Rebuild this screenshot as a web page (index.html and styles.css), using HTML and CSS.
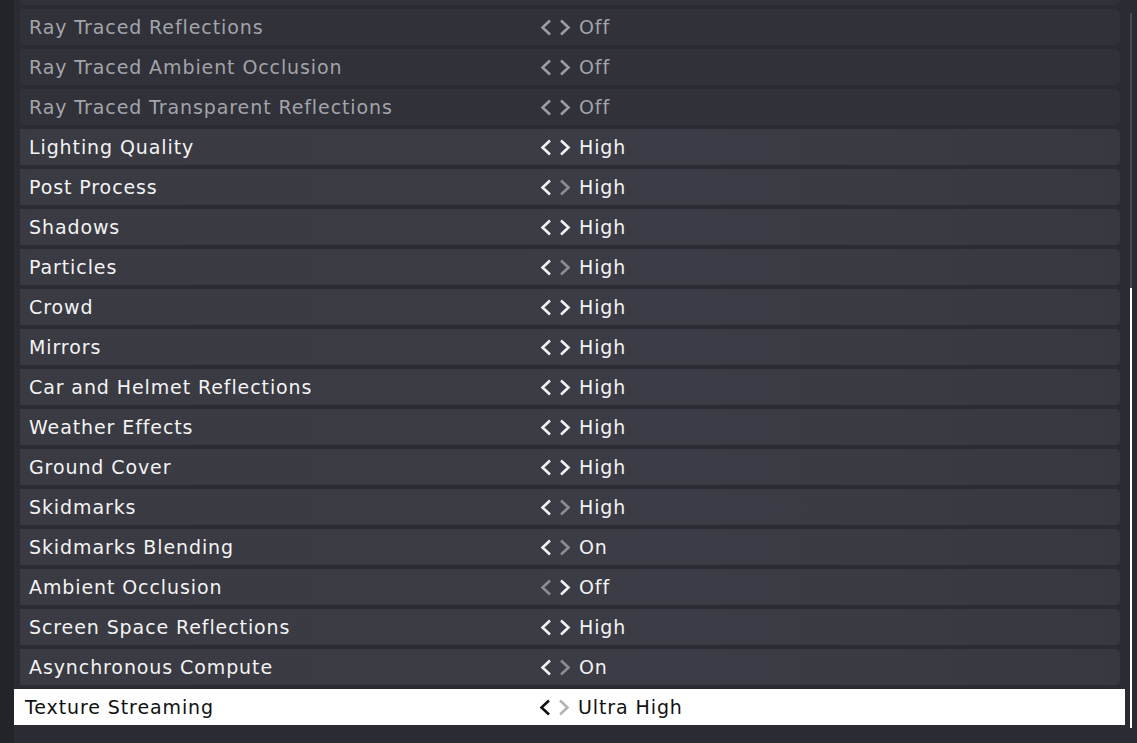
FILE: index.html
```html
<!DOCTYPE html>
<html>
<head>
<meta charset="utf-8">
<link rel="stylesheet" href="styles.css">
</head>
<body>
<div class="screen">
  <div class="edge"></div>
  <div class="panel">
    <div class="list">
      <div class="row disabled"></div>
      <div class="row disabled"><div class="label">Ray Traced Reflections</div><div class="value"><span class="chev"><svg viewBox="0 0 12 17"><polyline points="10,1.5 2.5,8.5 10,15.5"/></svg><svg viewBox="0 0 12 17"><polyline points="2,1.5 9.5,8.5 2,15.5"/></svg></span><span class="val">Off</span></div></div>
      <div class="row disabled"><div class="label">Ray Traced Ambient Occlusion</div><div class="value"><span class="chev"><svg viewBox="0 0 12 17"><polyline points="10,1.5 2.5,8.5 10,15.5"/></svg><svg viewBox="0 0 12 17"><polyline points="2,1.5 9.5,8.5 2,15.5"/></svg></span><span class="val">Off</span></div></div>
      <div class="row disabled"><div class="label">Ray Traced Transparent Reflections</div><div class="value"><span class="chev"><svg viewBox="0 0 12 17"><polyline points="10,1.5 2.5,8.5 10,15.5"/></svg><svg viewBox="0 0 12 17"><polyline points="2,1.5 9.5,8.5 2,15.5"/></svg></span><span class="val">Off</span></div></div>
      <div class="row"><div class="label">Lighting Quality</div><div class="value"><span class="chev"><svg viewBox="0 0 12 17"><polyline points="10,1.5 2.5,8.5 10,15.5"/></svg><svg viewBox="0 0 12 17"><polyline points="2,1.5 9.5,8.5 2,15.5"/></svg></span><span class="val">High</span></div></div>
      <div class="row"><div class="label">Post Process</div><div class="value"><span class="chev"><svg viewBox="0 0 12 17"><polyline points="10,1.5 2.5,8.5 10,15.5"/></svg><svg class="off" viewBox="0 0 12 17"><polyline points="2,1.5 9.5,8.5 2,15.5"/></svg></span><span class="val">High</span></div></div>
      <div class="row"><div class="label">Shadows</div><div class="value"><span class="chev"><svg viewBox="0 0 12 17"><polyline points="10,1.5 2.5,8.5 10,15.5"/></svg><svg viewBox="0 0 12 17"><polyline points="2,1.5 9.5,8.5 2,15.5"/></svg></span><span class="val">High</span></div></div>
      <div class="row"><div class="label">Particles</div><div class="value"><span class="chev"><svg viewBox="0 0 12 17"><polyline points="10,1.5 2.5,8.5 10,15.5"/></svg><svg class="off" viewBox="0 0 12 17"><polyline points="2,1.5 9.5,8.5 2,15.5"/></svg></span><span class="val">High</span></div></div>
      <div class="row"><div class="label">Crowd</div><div class="value"><span class="chev"><svg viewBox="0 0 12 17"><polyline points="10,1.5 2.5,8.5 10,15.5"/></svg><svg viewBox="0 0 12 17"><polyline points="2,1.5 9.5,8.5 2,15.5"/></svg></span><span class="val">High</span></div></div>
      <div class="row"><div class="label">Mirrors</div><div class="value"><span class="chev"><svg viewBox="0 0 12 17"><polyline points="10,1.5 2.5,8.5 10,15.5"/></svg><svg viewBox="0 0 12 17"><polyline points="2,1.5 9.5,8.5 2,15.5"/></svg></span><span class="val">High</span></div></div>
      <div class="row"><div class="label">Car and Helmet Reflections</div><div class="value"><span class="chev"><svg viewBox="0 0 12 17"><polyline points="10,1.5 2.5,8.5 10,15.5"/></svg><svg viewBox="0 0 12 17"><polyline points="2,1.5 9.5,8.5 2,15.5"/></svg></span><span class="val">High</span></div></div>
      <div class="row"><div class="label">Weather Effects</div><div class="value"><span class="chev"><svg viewBox="0 0 12 17"><polyline points="10,1.5 2.5,8.5 10,15.5"/></svg><svg viewBox="0 0 12 17"><polyline points="2,1.5 9.5,8.5 2,15.5"/></svg></span><span class="val">High</span></div></div>
      <div class="row"><div class="label">Ground Cover</div><div class="value"><span class="chev"><svg viewBox="0 0 12 17"><polyline points="10,1.5 2.5,8.5 10,15.5"/></svg><svg viewBox="0 0 12 17"><polyline points="2,1.5 9.5,8.5 2,15.5"/></svg></span><span class="val">High</span></div></div>
      <div class="row"><div class="label">Skidmarks</div><div class="value"><span class="chev"><svg viewBox="0 0 12 17"><polyline points="10,1.5 2.5,8.5 10,15.5"/></svg><svg class="off" viewBox="0 0 12 17"><polyline points="2,1.5 9.5,8.5 2,15.5"/></svg></span><span class="val">High</span></div></div>
      <div class="row"><div class="label">Skidmarks Blending</div><div class="value"><span class="chev"><svg viewBox="0 0 12 17"><polyline points="10,1.5 2.5,8.5 10,15.5"/></svg><svg class="off" viewBox="0 0 12 17"><polyline points="2,1.5 9.5,8.5 2,15.5"/></svg></span><span class="val">On</span></div></div>
      <div class="row"><div class="label">Ambient Occlusion</div><div class="value"><span class="chev"><svg class="off" viewBox="0 0 12 17"><polyline points="10,1.5 2.5,8.5 10,15.5"/></svg><svg viewBox="0 0 12 17"><polyline points="2,1.5 9.5,8.5 2,15.5"/></svg></span><span class="val">Off</span></div></div>
      <div class="row"><div class="label">Screen Space Reflections</div><div class="value"><span class="chev"><svg viewBox="0 0 12 17"><polyline points="10,1.5 2.5,8.5 10,15.5"/></svg><svg viewBox="0 0 12 17"><polyline points="2,1.5 9.5,8.5 2,15.5"/></svg></span><span class="val">High</span></div></div>
      <div class="row"><div class="label">Asynchronous Compute</div><div class="value"><span class="chev"><svg viewBox="0 0 12 17"><polyline points="10,1.5 2.5,8.5 10,15.5"/></svg><svg class="off" viewBox="0 0 12 17"><polyline points="2,1.5 9.5,8.5 2,15.5"/></svg></span><span class="val">On</span></div></div>
      <div class="row selected"><div class="label">Texture Streaming</div><div class="value"><span class="chev"><svg viewBox="0 0 12 17"><polyline points="10,1.5 2.5,8.5 10,15.5"/></svg><svg class="off" viewBox="0 0 12 17"><polyline points="2,1.5 9.5,8.5 2,15.5"/></svg></span><span class="val">Ultra High</span></div></div>
    </div>
    <div class="scrollbar"><div class="thumb"></div></div>
  </div>
</div>
</body>
</html>
```

FILE: styles.css
```css
html, body {
  margin: 0;
  padding: 0;
  background: #2a2b33;
  overflow: hidden;
}
.screen {
  display: flex;
  width: 1137px;
  height: 743px;
  overflow: hidden;
  font-family: "DejaVu Sans", "Liberation Sans", sans-serif;
  font-size: 19px;
  letter-spacing: 0.9px;
}
.edge {
  width: 14px;
  flex: none;
  background: #232429;
}
.panel {
  flex: 1;
  display: flex;
  background: #2a2b33;
}
.list {
  width: 1100px;
  margin-left: 6px;
  margin-top: -31px;
  display: flex;
  flex-direction: column;
  gap: 4px;
}
.row {
  height: 36px;
  flex: none;
  display: flex;
  align-items: center;
  background: linear-gradient(90deg, #393a42 0%, #3b3c45 60%, #373840 100%);
  border-radius: 0 5px 5px 0;
  color: #f3f3f3;
}
.row.disabled {
  background: #303139;
  color: #a3a4a9;
}
.label {
  width: 511px;
  padding-left: 9px;
  flex: none;
  white-space: nowrap;
}
.value {
  display: flex;
  align-items: center;
  white-space: nowrap;
}
.chev {
  display: flex;
  gap: 7px;
  margin-right: 8px;
}
.chev svg {
  width: 12px;
  height: 17px;
  display: block;
}
.chev polyline {
  fill: none;
  stroke: #f3f3f3;
  stroke-width: 2.6;
  stroke-linecap: butt;
  stroke-linejoin: miter;
}
.chev svg.off polyline {
  stroke: #8c8d93;
}
.row.disabled .chev polyline {
  stroke: #9c9da2;
}
.row.selected {
  background: #ffffff;
  color: #111111;
  margin: 0 -5px 0 -6px;
  border-radius: 0;
}
.row.selected .label {
  width: 514px;
  padding-left: 11px;
}
.row.selected .chev polyline {
  stroke: #111111;
}
.row.selected .chev svg.off polyline {
  stroke: #b4b4b6;
}
.scrollbar {
  width: 2px;
  margin-left: 10px;
  margin-top: 13px;
  height: 715px;
  background: #4a4b54;
  display: flex;
  flex-direction: column;
  justify-content: flex-end;
}
.thumb {
  height: 440px;
  background: #ffffff;
}
```
